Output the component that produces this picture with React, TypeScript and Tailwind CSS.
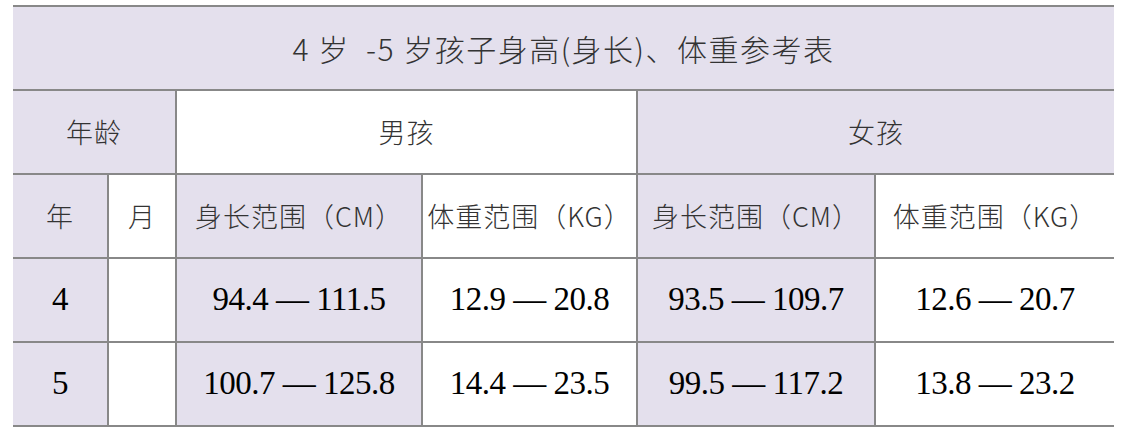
import React from 'react'

const cjk = "font-['Noto_Sans_CJK_SC','Noto_Sans',sans-serif] font-extralight text-[#333]"
const num = "font-['Liberation_Serif','Times_New_Roman',serif] text-black text-[33px] tracking-[-0.5px]"
const lav = 'bg-[#e4e0ed]'
const cell = 'border-2 border-[#888] text-center align-middle p-0'
const head = `${cjk} text-[27px] tracking-[1px]`

interface Row {
  age: string
  boyH: string
  boyW: string
  girlH: string
  girlW: string
}

const rows: Row[] = [
  { age: '4', boyH: '94.4 — 111.5', boyW: '12.9 — 20.8', girlH: '93.5 — 109.7', girlW: '12.6 — 20.7' },
  { age: '5', boyH: '100.7 — 125.8', boyW: '14.4 — 23.5', girlH: '99.5 — 117.2', girlW: '13.8 — 23.2' },
]

export default function App() {
  return (
    <div className="w-[1134px] h-[436px] bg-white pt-[5px] pl-[13px]">
      <table className="border-collapse table-fixed w-[1101px]">
        <colgroup>
          <col className="w-[95px]" />
          <col className="w-[68px]" />
          <col className="w-[246px]" />
          <col className="w-[215px]" />
          <col className="w-[238px]" />
          <col className="w-[239px]" />
        </colgroup>
        <tbody>
          <tr className="h-[84px]">
            <td colSpan={6} className={`${cell} border-x-0 ${lav} ${cjk} text-[30px] tracking-[1.5px]`}>
              4 岁&nbsp;&nbsp;-5 岁孩子身高(身长)、体重参考表
            </td>
          </tr>
          <tr className="h-[84px]">
            <td colSpan={2} className={`${cell} border-l-0 ${lav} ${head}`}>
              年龄
            </td>
            <td colSpan={2} className={`${cell} bg-white ${head}`}>
              男孩
            </td>
            <td colSpan={2} className={`${cell} border-r-0 ${lav} ${head}`}>
              女孩
            </td>
          </tr>
          <tr className="h-[84px]">
            <td className={`${cell} border-l-0 ${lav} ${head}`}>年</td>
            <td className={`${cell} bg-white ${head}`}>月</td>
            <td className={`${cell} ${lav} ${head}`}>身长范围（CM）</td>
            <td className={`${cell} bg-white ${head}`}>体重范围（KG）</td>
            <td className={`${cell} ${lav} ${head}`}>身长范围（CM）</td>
            <td className={`${cell} border-r-0 bg-white ${head}`}>体重范围（KG）</td>
          </tr>
          {rows.map((r) => (
            <tr key={r.age} className="h-[84px]">
              <td className={`${cell} border-l-0 ${lav} ${num}`}>{r.age}</td>
              <td className={`${cell} bg-white`}></td>
              <td className={`${cell} ${lav} ${num}`}>{r.boyH}</td>
              <td className={`${cell} bg-white ${num}`}>{r.boyW}</td>
              <td className={`${cell} ${lav} ${num}`}>{r.girlH}</td>
              <td className={`${cell} border-r-0 bg-white ${num}`}>{r.girlW}</td>
            </tr>
          ))}
        </tbody>
      </table>
    </div>
  )
}
